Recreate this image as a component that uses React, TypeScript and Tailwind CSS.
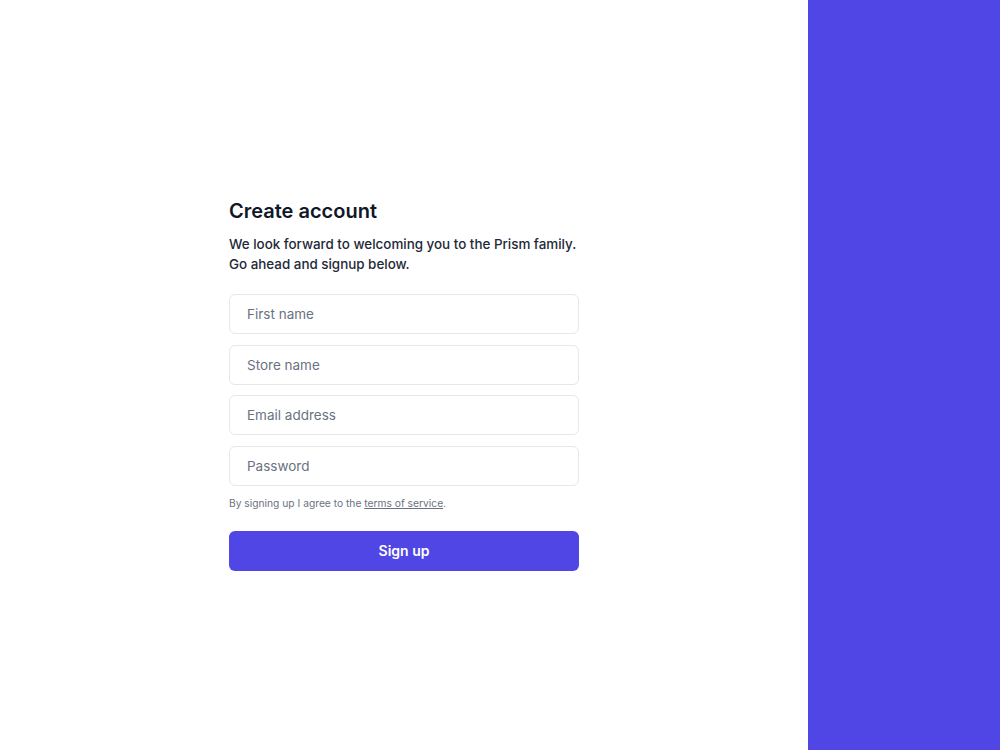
import { useState } from "react";

const fields = [
  { name: "firstName", placeholder: "First name", type: "text" },
  { name: "storeName", placeholder: "Store name", type: "text" },
  { name: "email", placeholder: "Email address", type: "email" },
  { name: "password", placeholder: "Password", type: "password" },
];

const App = () => {
  const [values, setValues] = useState<Record<string, string>>({});

  return (
    <div className="flex h-[750px] w-full font-['Inter',sans-serif]">
      <div className="flex flex-1 justify-center bg-white pt-[197px]">
        <form className="w-[350px]" onSubmit={(e) => e.preventDefault()}>
          <h1 className="text-xl font-semibold text-gray-900">
            Create account
          </h1>
          <p className="mt-[9px] text-[13.4px] font-medium leading-5 text-gray-800">
            We look forward to welcoming you to the Prism family. Go ahead and
            signup below.
          </p>
          <div className="mt-[20px] flex flex-col gap-[10.5px]">
            {fields.map((f) => (
              <input
                key={f.name}
                type={f.type}
                placeholder={f.placeholder}
                value={values[f.name] ?? ""}
                onChange={(e) =>
                  setValues({ ...values, [f.name]: e.target.value })
                }
                className="h-10 w-full rounded-md border border-gray-200 px-[17px] text-[13.5px] text-gray-900 placeholder:text-gray-500 outline-none focus:border-indigo-500"
              />
            ))}
          </div>
          <p className="mt-[10px] text-[10.25px] text-gray-500">
            By signing up I agree to the{" "}
            <a href="#" className="underline">
              terms of service
            </a>
            .
          </p>
          <button
            type="submit"
            className="mt-[20px] h-10 w-full rounded-md bg-[#4f46e5] text-sm font-semibold text-white"
          >
            Sign up
          </button>
        </form>
      </div>
      <div className="w-[192px] bg-[#4f46e5]" />
    </div>
  );
};

export default App;
